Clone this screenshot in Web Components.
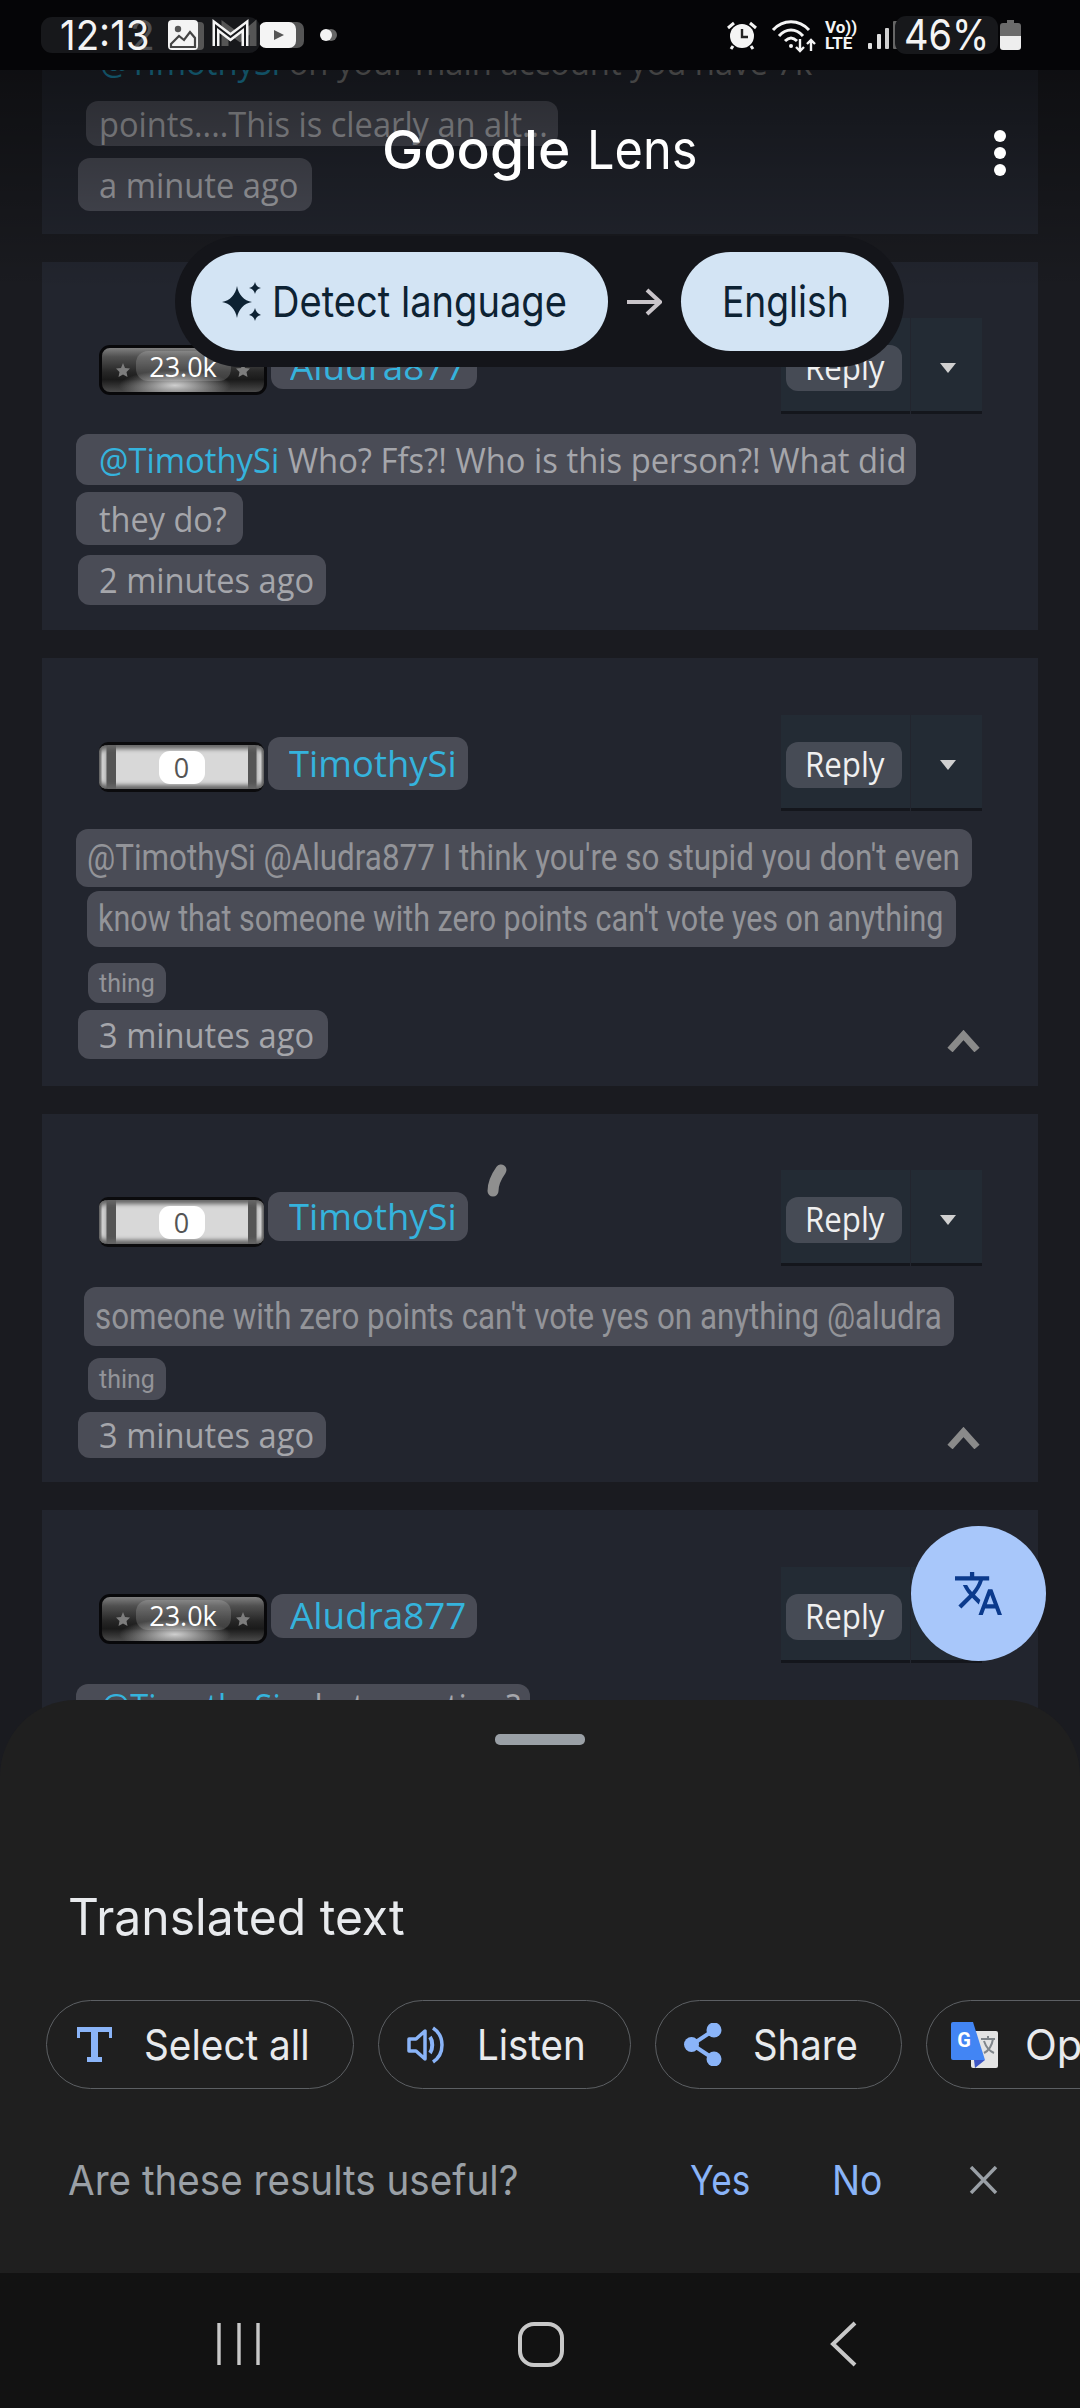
<!DOCTYPE html>
<html>
<head>
<meta charset="utf-8">
<style>
  html, body { margin: 0; background: #1a1b20; }
  .at { color: #35b3dd; }
  .chat { font: 400 34px "Open Sans", sans-serif; color: #a5a6ab; }
  .ocr { font: 400 36px Roboto, sans-serif; color: #939499; }
  .tiny { font: 400 25px Roboto, sans-serif; color: #939499; }
</style>
</head>
<body>
<phone-screen>
  <status-bar></status-bar>
  <comment-feed>
    <comment-card style="height:164px;--top:0px">
      <text-chip class="chat" w="712" style="--bg:transparent;--l:24px;margin-top:-28px;height:40px;color:#777"><span style="color:#1f8fb3">@TimothySi</span> on your main account you have 7k</text-chip>
      <text-chip class="chat" w="449" style="--l:13px;--r:10px;margin:19px 0 0 10px;height:45px">points....This is clearly an alt...</text-chip>
      <text-chip class="chat" w="199" style="--r:14px;margin:12px 0 0 2px;height:53px">a minute ago</text-chip>
    </comment-card>

    <comment-card style="height:368px;--top:56px">
      <comment-head score="23.0k" name="Aludra877" style="--name-top:27px;--name-h:44px"></comment-head>
      <text-chip class="chat" w="807" style="--l:23px;--r:10px;margin-top:20px;height:51px"><span class="at">@TimothySi</span> Who? Ffs?! Who is this person?! What did</text-chip>
      <text-chip class="chat" w="128" style="--l:23px;--r:16px;margin-top:7px;height:53px">they do?</text-chip>
      <text-chip class="chat" w="215" style="margin:10px 0 0 2px;height:50px">2 minutes ago</text-chip>
    </comment-card>

    <comment-card style="height:428px;--top:57px">
      <comment-head score="0" name="TimothySi" style="--name-top:22px;--name-h:53px"></comment-head>
      <text-chip class="ocr" w="873" style="--l:11px;margin-top:18px;height:58px">@TimothySi @Aludra877 I think you're so stupid you don't even</text-chip>
      <text-chip class="ocr" w="845" style="--l:11px;--r:13px;margin:4px 0 0 11px;height:56px">know that someone with zero points can't vote yes on anything</text-chip>
      <text-chip class="tiny" w="56" style="--l:11px;--r:11px;margin:16px 0 0 12px;height:40px">thing</text-chip>
      <comment-foot style="--chev-top:20px;margin-top:7px">
        <text-chip slot="time" class="chat" w="215" style="--r:14px;margin-left:2px;height:49px">3 minutes ago</text-chip>
      </comment-foot>
    </comment-card>

    <comment-card style="height:368px;--top:56px">
      <comment-head score="0" name="TimothySi" style="--name-top:22px;--name-h:49px"></comment-head>
      <text-chip class="ocr" w="847" style="--l:11px;margin:21px 0 0 8px;height:59px">someone with zero points can't vote yes on anything @aludra</text-chip>
      <text-chip class="tiny" w="56" style="--l:11px;--r:11px;margin:12px 0 0 12px;height:42px">thing</text-chip>
      <comment-foot style="--chev-top:15px;margin-top:12px">
        <text-chip slot="time" class="chat" w="215" style="--r:12px;margin-left:2px;height:46px">3 minutes ago</text-chip>
      </comment-foot>
    </comment-card>

    <comment-card style="height:400px;--top:57px">
      <comment-head score="23.0k" name="Aludra877" style="--name-top:27px;--name-h:44px"></comment-head>
      <text-chip class="chat" w="419" style="--l:25px;--r:10px;margin-top:21px;height:44px"><span class="at">@TimothySi</span> what question?</text-chip>
    </comment-card>
  </comment-feed>
  <bottom-sheet></bottom-sheet>
  <nav-bar></nav-bar>

  <lens-header></lens-header>
  <lang-pill></lang-pill>
  <pen-stroke></pen-stroke>
  <translate-fab></translate-fab>
</phone-screen>

<script>
// shared base: renders into an open shadow root, then squeezes [data-w] texts to their width
class Part extends HTMLElement {
  constructor() {
    super();
    this.shadowDOM = this.attachShadow({ mode: 'open' });
  }

  connectedCallback() {
    this.shadowDOM.innerHTML = this.render();
    queueMicrotask(() => {
      this.shadowDOM.querySelectorAll('[data-w]').forEach(el => {
        const want = +el.dataset.w;
        const have = el.offsetWidth;
        el.style.transform = `scaleX(${want / have})`;
        el.style.marginRight = `${want - have}px`;
      });
    });
  }
}

const FIT = `[data-w] { display: inline-block; white-space: nowrap; transform-origin: 0 50%; flex: none; }`;
const UI = `Inter, Roboto, sans-serif`;

class PhoneScreen extends Part {
  render() {
    return `<style>
      :host { display: flex; flex-direction: column; position: relative; width: 1080px; height: 2408px; overflow: hidden; background: #1a1b20; }
    </style><slot></slot>`;
  }
}

class StatusBar extends Part {
  render() {
    return `<style>
      ${FIT}
      :host { display: flex; justify-content: space-between; align-items: center; flex: none; height: 70px; background: #050507; color: #f4f4f4; padding: 0 59px 0 41px; box-sizing: border-box; position: relative; z-index: 3; font-family: Inter, Roboto, sans-serif; }
      .group { display: flex; align-items: center; }
      svg { display: block; flex: none; overflow: visible; }
      .clock { display: flex; align-items: center; position: relative; width: 219px; height: 36px; padding-left: 19px; box-sizing: border-box; background: #17181b; border-radius: 11px; font-size: 41px; line-height: 1; }
      .ghost { position: absolute; left: 89px; top: -2px; color: #4e4f52; }
      .time { position: relative; }
      .gal { margin-left: 18px; }
      .gm { margin-left: 15px; }
      .yt { margin-left: -1px; }
      .dot { margin-left: 24px; }
      .volte { margin: 0 11px 0 8px; width: 32px; font: 700 17px/16px Roboto, sans-serif; }
      .wifi { margin-left: 14px; }
      .pct { display: flex; align-items: center; justify-content: center; width: 103px; height: 38px; margin-left: -5px; background: #17181b; border-radius: 11px; font-size: 42px; line-height: 1; position: relative; }
      .batt { margin-left: 2px; }
    </style>
    <div class="group">
      <div class="clock"><span class="ghost" aria-hidden="true">2</span><span class="time" data-w="90">12:13</span>
        <svg class="gal" width="30" height="30" viewBox="0 0 30 30"><rect x="6" y="2" width="30" height="28" rx="4" fill="#555"/><rect width="30" height="30" rx="4" fill="#f4f4f4"/><circle cx="10" cy="9" r="3.2" fill="#555"/><path d="M3 24 L11 16 L16 20 L22 12 L27 18 V27 H3Z" fill="#f4f4f4" stroke="#444" stroke-width="2.2"/></svg>
        <svg class="gm" width="35" height="26" viewBox="0 0 35 26"><path d="M12 24V5L27 16L40 5V24" fill="none" stroke="#555" stroke-width="7"/><path d="M3 24V4L17.5 15L32 4V24" fill="none" stroke="#f4f4f4" stroke-width="7"/><path d="M3 24V4L17.5 15L32 4V24" fill="none" stroke="#17181b" stroke-width="2"/></svg>
      </div>
      <svg class="yt" width="37" height="26" viewBox="0 0 37 26"><rect x="8" width="37" height="26" rx="7" fill="#555"/><rect width="37" height="26" rx="7" fill="#f4f4f4"/><path d="M15 8L25 13L15 18Z" fill="#555"/></svg>
      <svg class="dot" width="12" height="12" viewBox="0 0 12 12"><circle cx="11" cy="6" r="6" fill="#666"/><circle cx="6" cy="6" r="6" fill="#f4f4f4"/></svg>
    </div>
    <div class="group">
      <svg width="30" height="28" viewBox="0 0 30 28"><circle cx="15" cy="15" r="12" fill="#f4f4f4"/><path d="M15 8V16H21" fill="none" stroke="#222" stroke-width="2.4"/><path d="M1 7L7 2M29 7L23 2M6 25L4 28M24 25L26 28" stroke="#f4f4f4" stroke-width="3"/></svg>
      <svg class="wifi" width="46" height="33" viewBox="0 0 46 33" fill="none" stroke="#f4f4f4" stroke-width="3"><path d="M2 11C12 0 28 0 38 11"/><path d="M8 17C15 9 25 9 32 17"/><path d="M14 22C18 18 22 18 26 22"/><circle cx="20" cy="27" r="2" fill="#f4f4f4" stroke="none"/><path d="M29 20V32M25 28L29 32L33 28M40 32V21M36 25L40 21L44 25" stroke-width="2.4"/></svg>
      <div class="volte"><div>Vo))</div><div>LTE</div></div>
      <svg width="32" height="28" viewBox="0 0 32 28"><rect y="22" width="4" height="6" rx="1" fill="#e0e0e0"/><rect x="9" y="13" width="4" height="15" rx="1" fill="#e0e0e0"/><rect x="17" y="7" width="4" height="21" rx="1" fill="#d0d0d0"/><rect x="25" width="5" height="28" rx="1" fill="#666"/></svg>
      <div class="pct"><span data-w="85">46%</span></div>
      <svg class="batt" width="21" height="30" viewBox="0 0 21 30"><path d="M7 0H14V3H18A3 3 0 0 1 21 6V16H0V6A3 3 0 0 1 3 3H7Z" fill="#6b6b6b"/><path d="M0 16H21V27A3 3 0 0 1 18 30H3A3 3 0 0 1 0 27Z" fill="#eee"/></svg>
    </div>`;
  }
}

class CommentFeed extends Part {
  render() {
    return `<style>
      :host { display: block; flex: 1; min-height: 0; overflow: hidden; margin-bottom: -60px; }
    </style><slot></slot>`;
  }
}

class CommentCard extends Part {
  render() {
    return `<style>
      :host { display: flow-root; box-sizing: border-box; margin: 0 42px 28px; padding: var(--top, 56px) 56px 0 34px; background: #22252e; }
    </style><slot></slot>`;
  }
}

class CommentHead extends Part {
  render() {
    const name = this.getAttribute('name');
    const nameWidth = name === 'Aludra877' ? 176 : 168;
    const nameLeft = name === 'Aludra877' ? 19 : 21;
    return `<style>
      ${FIT}
      :host { display: flex; justify-content: space-between; height: 96px; font-family: "Open Sans", sans-serif; }
      .who { display: flex; align-items: flex-start; margin-left: 23px; }
      rep-badge { margin-top: 27px; }
      .name { display: flex; align-items: center; box-sizing: border-box; margin: var(--name-top) 0 0 4px; height: var(--name-h); padding: 0 11px 0 ${nameLeft}px; border-radius: 12px; background: #4a4c56; color: #35b3dd; font-size: 36px; line-height: 1; }
    </style>
    <div class="who">
      <rep-badge score="${this.getAttribute('score')}"></rep-badge>
      <div class="name"><span data-w="${nameWidth}">${name}</span></div>
    </div>
    <reply-box></reply-box>`;
  }
}

class RepBadge extends Part {
  render() {
    const score = this.getAttribute('score');
    const star = `<svg width="24" height="24" viewBox="0 0 24 24"><path d="M12 5L14 10L19 10.500L15.500 14L16.500 19L12 16.500L7.500 19L8.500 14L5 10.500L10 10Z" fill="#7d7d7d"/></svg>`;
    if (score === '0') {
      return `<style>
        :host { display: flex; align-items: center; justify-content: center; box-sizing: border-box; width: 165px; height: 50px; border-radius: 9px;
          background: linear-gradient(90deg, #555 0, #ddd 2%, #bbb 4%, #555 5%, #555 10%, #d8d8d8 10%, #d8d8d8 90%, #555 90%, #555 95%, #bbb 96%, #ddd 98%, #555 100%); border: solid #0b0b0d; border-width: 3px 0; box-shadow: inset 0 4px 4px #666, inset 0 -4px 4px #666; font: 400 27px "Open Sans", sans-serif; color: #555; }
        span { display: flex; align-items: center; justify-content: center; width: 46px; height: 33px; border-radius: 11px; background: #fff; line-height: 1; }
      </style><span>${score}</span>`;
    }
    return `<style>
      :host { display: flex; align-items: center; justify-content: space-between; box-sizing: border-box; width: 168px; height: 50px; padding: 0 9px; border: 3px solid #08080a; border-radius: 11px;
        background: radial-gradient(ellipse 56px 15px at 45% 85%, #cfcfcf, transparent), linear-gradient(#808080 0, #505050 20%, #262626 55%, #1a1a1a 72%, #4a4a4a 100%); font: 400 27px "Open Sans", sans-serif; color: #fff; }
      span { display: flex; align-items: center; justify-content: center; width: 95px; height: 30px; margin-top: -8px; border-radius: 12px; background: rgba(255,255,255,.16); line-height: 1; }
      svg { flex: none; }
    </style>${star}<span>${score}</span>${star}`;
  }
}

class ReplyBox extends Part {
  render() {
    return `<style>
      ${FIT}
      :host { display: flex; flex: none; width: 201px; height: 96px; font: 400 34px "Open Sans", sans-serif; color: #f0f0f0; }
      div { box-sizing: border-box; height: 96px; background: #232b34; border-bottom: 3px solid #14161c; }
      .cell { width: 129px; padding: 27px 0 0 5px; }
      .more { width: 71px; margin-left: 1px; display: flex; justify-content: center; padding: 45px 0 0 2px; }
      b { display: flex; align-items: center; width: 116px; height: 46px; box-sizing: border-box; padding: 0 0 3px 19px; background: #464b55; border-radius: 12px; font-weight: 400; line-height: 1; }
      i { width: 0; height: 0; border: solid transparent; border-width: 10px 8.5px 0; border-top-color: #d0d0d0; }
    </style>
    <div class="cell"><b><span data-w="80">Reply</span></b></div>
    <div class="more"><i></i></div>`;
  }
}

class TextChip extends Part {
  render() {
    return `<style>
      ${FIT}
      :host { display: flex; align-items: center; box-sizing: border-box; width: fit-content; padding: 0 var(--r, 12px) 0 var(--l, 21px); border-radius: 12px; background: var(--bg, #4a4c56); line-height: 1; white-space: nowrap; }
    </style><span data-w="${this.getAttribute('w')}"><slot></slot></span>`;
  }
}

class CommentFoot extends Part {
  render() {
    return `<style>
      :host { display: flex; justify-content: space-between; }
      svg { display: block; margin: var(--chev-top) 2px 0 0; }
    </style>
    <slot name="time"></slot>
    <svg width="33" height="22" viewBox="0 0 33 22"><path d="M3 20L16.5 5L30 20" fill="none" stroke="#8a8a8a" stroke-width="7"/></svg>`;
  }
}

class BottomSheet extends Part {
  render() {
    return `<style>
      ${FIT}
      :host { display: block; flex: none; box-sizing: border-box; height: 573px; padding-top: 34px; position: relative; z-index: 1; overflow: hidden; background: #1f1f1f; border-radius: 76px 76px 0 0; font-family: ${UI}; }
      .handle { width: 90px; height: 11px; margin: 0 auto; border-radius: 5px; background: #9aa0a6; }
      h2 { margin: 142px 0 0 68px; height: 60px; font-size: 50px; font-weight: 400; line-height: 60px; color: #e8eaed; }
      .actions { display: flex; gap: 24px; margin: 53px 0 0 46px; width: 1300px; }
      .ask { display: flex; align-items: center; height: 60px; margin: 61px 0 0 68px; font-size: 41px; line-height: 1; color: #9aa0a6; }
      .yes { margin-left: 172px; color: #8ab4f8; }
      .no { margin-left: 81px; color: #8ab4f8; }
      .ask svg { margin-left: 87px; }
    </style>
    <div class="handle"></div>
    <h2><span data-w="337">Translated text</span></h2>
    <div class="actions">
      <action-chip icon="text" w="166" style="width:308px;--gap:32px;--l:30px"><span>Select all</span></action-chip>
      <action-chip icon="speaker" w="109" style="width:253px;--gap:31px;--l:28px"><span>Listen</span></action-chip>
      <action-chip icon="share" w="105" style="width:247px;--gap:31px;--l:28px"><span>Share</span></action-chip>
      <action-chip icon="gt" w="345" style="width:480px;--gap:27px;--l:24px"><span>Open in Translate</span></action-chip>
    </div>
    <div class="ask">
      <span data-w="450">Are these results useful?</span>
      <span class="yes" data-w="60">Yes</span>
      <span class="no" data-w="50">No</span>
      <svg width="29" height="28" viewBox="0 0 29 28"><path d="M2 1L27 27M27 1L2 27" stroke="#9aa0a6" stroke-width="3.4"/></svg>
    </div>`;
  }
}

const ACTION_ICONS = {
  text: `<svg width="35" height="35" viewBox="0 0 35 35" fill="#8ab4f8"><path d="M0 0H35V11H32V5H21V30H25V35H10V30H14V5H3V11H0Z"/></svg>`,
  speaker: `<svg width="39" height="38" viewBox="0 0 39 38" fill="none" stroke="#8ab4f8" stroke-width="3.5"><path d="M2 13H9L18 5V33L9 25H2Z" fill="none" stroke-linejoin="round"/><path d="M23 11C26 15 26 23 23 27" stroke-width="4"/><path d="M26 2C38 10 38 28 26 36"/></svg>`,
  share: `<svg width="38" height="43" viewBox="0 0 38 43"><path d="M30 7L8 21.5L30 36" fill="none" stroke="#8ab4f8" stroke-width="4"/><circle cx="30" cy="7" r="7.5" fill="#8ab4f8"/><circle cx="7.5" cy="21.5" r="7.5" fill="#8ab4f8"/><circle cx="30" cy="36" r="7.5" fill="#8ab4f8"/></svg>`,
  gt: `<svg width="47" height="46" viewBox="0 0 47 46"><rect x="20" y="9" width="27" height="37" rx="2" fill="#e4e4e4"/><path d="M30 17H44M37 14V17M33 31C39 28 41 23 42 17M33 19C35 25 38 29 43 31" fill="none" stroke="#80868b" stroke-width="2"/><path d="M23 38H34L24 46Z" fill="#3c55c4"/><path d="M2 0H22L34 38H2A2 2 0 0 1 0 36V2A2 2 0 0 1 2 0Z" fill="#4285f4"/><text x="13" y="25" text-anchor="middle" font-family="Roboto, sans-serif" font-weight="700" font-size="20" fill="#fff">G</text></svg>`
};

class ActionChip extends Part {
  render() {
    return `<style>
      ${FIT}
      :host { display: flex; align-items: center; flex: none; box-sizing: border-box; height: 89px; padding-left: var(--l); border: 1.5px solid #5c5f63; border-radius: 45px; font-size: 42px; line-height: 1; color: #e8eaed; }
      svg { display: block; flex: none; margin-right: var(--gap); }
    </style>${ACTION_ICONS[this.getAttribute('icon')]}<span data-w="${this.getAttribute('w')}"><slot></slot></span>`;
  }
}

class NavBar extends Part {
  render() {
    return `<style>
      :host { display: flex; align-items: center; flex: none; gap: 242px; height: 135px; padding: 6px 0 0 209px; box-sizing: border-box; background: #121212; position: relative; z-index: 1; }
      svg { display: block; flex: none; }
    </style>
    <svg width="60" height="46" viewBox="0 0 60 46" stroke="#c8c8c8" stroke-width="3.4"><path d="M10 2V44M30 2V44M49 2V44"/></svg>
    <svg width="60" height="46" viewBox="0 0 60 46"><rect x="9" y="3" width="42" height="41" rx="14" fill="none" stroke="#c8c8c8" stroke-width="4"/></svg>
    <svg width="60" height="46" viewBox="0 0 60 46"><path d="M42 2L20 23L42 44" fill="none" stroke="#c8c8c8" stroke-width="4"/></svg>`;
  }
}

class LensHeader extends Part {
  render() {
    return `<style>
      ${FIT}
      :host { position: absolute; top: 70px; left: 0; width: 1080px; height: 220px; box-sizing: border-box; padding: 50px 0 0 382px; display: flex; align-items: flex-start; pointer-events: none; background: linear-gradient(rgba(0,0,0,.45), rgba(0,0,0,0)); font: 400 54px/60px ${UI}; color: #fff; }
      b { font-weight: 500; }
      .lens { margin-left: 17px; }
      svg { position: absolute; left: 993px; top: 60px; }
    </style>
    <b data-w="188">Google</b><div class="lens"><span data-w="110">Lens</span></div>
    <svg width="14" height="46" viewBox="0 0 14 46" fill="#fff"><circle cx="7" cy="6" r="6"/><circle cx="7" cy="23" r="6"/><circle cx="7" cy="40" r="6"/></svg>`;
  }
}

class LangPill extends Part {
  render() {
    return `<style>
      ${FIT}
      :host { position: absolute; left: 175px; top: 236px; display: flex; align-items: center; box-sizing: border-box; width: 729px; height: 131px; padding-left: 16px; border-radius: 66px; background: #14151a; font: 400 43px/1 ${UI}; color: #0d2233; }
      .lang { display: flex; align-items: center; box-sizing: border-box; height: 99px; border-radius: 50px; background: #d3e4f4; }
      .from { width: 417px; padding-left: 30px; }
      .to { width: 208px; padding-left: 41px; }
      .from svg { flex: none; margin-right: 2px; }
      .arrow { flex: none; margin: 0 19px; }
    </style>
    <div class="lang from">
      <svg width="49" height="40" viewBox="0 0 49 40" fill="#0d2233"><path d="M16 4C17.500 13 23 18.500 31 20C23 21.500 17.500 27 16 36C14.500 27 9 21.500 1 20C9 18.500 14.500 13 16 4Z"/><path d="M34 0C34.800 3.500 36.500 5.200 40 6C36.500 6.800 34.800 8.500 34 12C33.200 8.500 31.500 6.800 28 6C31.500 5.200 33.200 3.500 34 0Z"/><path d="M34 26C34.800 29.500 36.500 31.200 40 33C36.500 33.800 34.800 35.500 34 39C33.200 35.500 31.500 33.800 28 33C31.500 31.200 33.200 29.500 34 26Z"/></svg>
      <span data-w="295">Detect language</span>
    </div>
    <svg class="arrow" width="35" height="28" viewBox="0 0 35 28" fill="none" stroke="#c9c4c9" stroke-width="4"><path d="M0 14H33M20 2L33 14L20 26"/></svg>
    <div class="lang to"><span data-w="127">English</span></div>`;
  }
}

class PenStroke extends Part {
  render() {
    return `<style>
      :host { position: absolute; left: 480px; top: 1160px; }
      svg { display: block; }
    </style>
    <svg width="32" height="42" viewBox="0 0 32 42"><path d="M21 10C16 17 13 23 13 31" fill="none" stroke="#8f8f8f" stroke-width="11" stroke-linecap="round"/></svg>`;
  }
}

class TranslateFab extends Part {
  render() {
    return `<style>
      :host { position: absolute; left: 911px; top: 1526px; display: flex; align-items: center; justify-content: center; width: 135px; height: 135px; border-radius: 50%; background: #a8c7fa; }
    </style>
    <svg width="47" height="43" viewBox="1 2 22 20" preserveAspectRatio="none" fill="#0b3a8c"><path d="M12.87 15.07l-2.54-2.51.03-.03c1.74-1.94 2.98-4.17 3.71-6.53H17V4h-7V2H8v2H1v1.99h11.17C11.5 7.92 10.44 9.75 9 11.35 8.07 10.32 7.3 9.19 6.69 8h-2c.73 1.63 1.73 3.17 2.98 4.56l-5.09 5.02L4 19l5-5 3.11 3.11.76-2.04zM18.5 10h-2L12 22h2l1.12-3h4.75L21 22h2l-4.5-12zm-2.62 7l1.62-4.33L19.12 17h-3.24z"/></svg>`;
  }
}

customElements.define('phone-screen', PhoneScreen);
customElements.define('status-bar', StatusBar);
customElements.define('comment-feed', CommentFeed);
customElements.define('comment-card', CommentCard);
customElements.define('comment-head', CommentHead);
customElements.define('rep-badge', RepBadge);
customElements.define('reply-box', ReplyBox);
customElements.define('text-chip', TextChip);
customElements.define('comment-foot', CommentFoot);
customElements.define('bottom-sheet', BottomSheet);
customElements.define('action-chip', ActionChip);
customElements.define('nav-bar', NavBar);
customElements.define('lens-header', LensHeader);
customElements.define('lang-pill', LangPill);
customElements.define('pen-stroke', PenStroke);
customElements.define('translate-fab', TranslateFab);
</script>
</body>
</html>
